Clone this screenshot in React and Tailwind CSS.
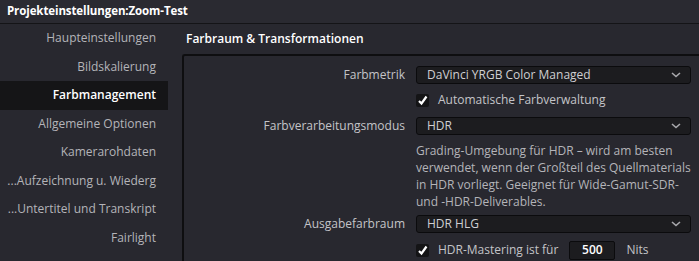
import React from 'react';

const navItems = [
  'Haupteinstellungen',
  'Bildskalierung',
  'Farbmanagement',
  'Allgemeine Optionen',
  'Kamerarohdaten',
  '...Aufzeichnung u. Wiederg',
  '...Untertitel und Transkript',
  'Fairlight',
];

function Chevron() {
  return (
    <svg width="10" height="6" viewBox="0 0 10 6" className="shrink-0">
      <path d="M1 1 L5 4.5 L9 1" fill="none" stroke="#a8a8ac" strokeWidth="1.6" />
    </svg>
  );
}

function Select({ value }) {
  return (
    <div className="flex h-[18px] w-[275px] shrink-0 items-center justify-between rounded-[3px] border border-[#0b0b0d] bg-[#1c1c1f] pl-[10px] pr-[9px] text-[#cfcfd2]">
      <span>{value}</span>
      <Chevron />
    </div>
  );
}

function Check() {
  return (
    <div className="flex h-[13px] w-[13px] shrink-0 items-center justify-center rounded-[2px] bg-[#141416]">
      <svg width="11" height="11" viewBox="0 0 11 11">
        <path d="M2 6 L4.5 8.5 L9.5 1.5" fill="none" stroke="#ffffff" strokeWidth="2.2" />
      </svg>
    </div>
  );
}

function Row({ label, children, className = '' }) {
  return (
    <div className={`flex items-center ${className}`}>
      <div className="w-[232px] shrink-0 pr-[11px] text-right text-[#c4c4c8]">{label}</div>
      {children}
    </div>
  );
}

export default function App() {
  return (
    <div className="flex h-[261px] w-[699px] flex-col overflow-hidden bg-[#28282f] font-['Open_Sans',sans-serif] text-[12px]">
      <div className="flex h-[24px] shrink-0 items-center border-b border-[#141417] bg-[#2a2a31] px-[7px] pb-[1px] text-[11.5px] font-bold tracking-[-0.1px] text-white">
        Projekteinstellungen:Zoom-Test
      </div>

      <div className="flex min-h-0 flex-1">
        <div className="flex w-[168px] shrink-0 flex-col">
          {navItems.map((item) => {
            const active = item === 'Farbmanagement';
            return (
              <div
                key={item}
                className={`flex h-[28.5px] shrink-0 items-center justify-end whitespace-nowrap pr-[12px] ${
                  active ? 'bg-[#151517] font-semibold text-white' : 'text-[#b4b4b9]'
                }`}
              >
                {item}
              </div>
            );
          })}
        </div>

        <div className="ml-[14px] flex min-w-0 flex-1 flex-col">
          <div className="flex h-[30px] shrink-0 items-center pl-[4px] font-semibold text-white">
            Farbraum & Transformationen
          </div>
          <div className="flex-1 rounded-tl-[3px] border-l-2 border-t-2 border-[#0e0e10] pt-[10px]">
            <Row label="Farbmetrik">
              <Select value="DaVinci YRGB Color Managed" />
            </Row>
            <div className="mt-[7px] flex h-[18px] items-center pl-[232px] text-[#c4c4c8]">
              <Check />
              <span className="ml-[9px]">Automatische Farbverwaltung</span>
            </div>
            <Row label="Farbverarbeitungsmodus" className="mt-[8px]">
              <Select value="HDR" />
            </Row>
            <p className="mt-[6.5px] ml-[232px] w-[278px] leading-[17px] text-[#b4b4b9]">
              Grading-Umgebung für HDR – wird am besten verwendet, wenn der Großteil des Quellmaterials in HDR vorliegt. Geeignet für Wide-Gamut-SDR- und -HDR-Deliverables.
            </p>
            <Row label="Ausgabefarbraum" className="mt-[5.5px]">
              <Select value="HDR HLG" />
            </Row>
            <div className="mt-[7.5px] flex h-[19px] items-center pl-[232px] text-[#c4c4c8]">
              <Check />
              <span className="ml-[9px]">HDR-Mastering ist für</span>
              <div className="ml-[11px] flex h-[19px] w-[46px] items-center justify-center rounded-[2px] border border-[#0b0b0d] bg-[#1c1c1f] font-semibold text-white">
                500
              </div>
              <span className="ml-[11px]">Nits</span>
            </div>
          </div>
        </div>
      </div>
    </div>
  );
}
